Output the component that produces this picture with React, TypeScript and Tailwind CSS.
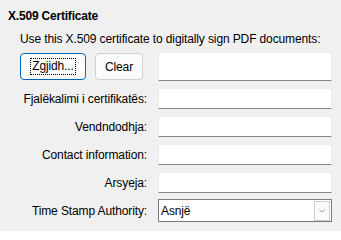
import { ChevronDown } from 'lucide-react'

const FIELDS = ['Fjalëkalimi i certifikatës:', 'Vendndodhja:', 'Contact information:', 'Arsyeja:']

function TextField() {
  return <div className="h-[21px] w-[174px] border border-[#ececec] border-b-[#868686] bg-white" />
}

export default function App() {
  return (
    <div
      className="h-[231px] w-[341px] whitespace-nowrap bg-[#f0f0f0] px-2 pt-[8px] text-[12px] leading-[16px] tracking-[-0.12px] text-black"
      style={{ fontFamily: '"Liberation Sans", Arial, sans-serif' }}
    >
      <div className="font-bold tracking-[-0.2px]">X.509 Certificate</div>
      <div className="pl-3">
        <div className="mt-[7px]">Use this X.509 certificate to digitally sign PDF documents:</div>

        {/* buttons + certificate name */}
        <div className="mt-[5px] flex items-center">
          <div className="flex w-[138px] gap-[9px]">
            <button className="flex h-[27px] w-[66px] items-center justify-center rounded-[4px] border border-[#0067c0] bg-[#fdfdfd]">
              <span className="px-[1px] leading-[15px] outline-1 outline-dotted outline-black">Zgjidh...</span>
            </button>
            <button className="h-[27px] w-[48px] rounded-[4px] border border-[#d0d0d0] bg-[#fbfbfb]">Clear</button>
          </div>
          <div className="h-[29px] w-[174px] border border-[#ececec] border-b-[#868686] bg-white" />
        </div>

        <div className="mt-[7px] flex flex-col gap-[7px]">
          {FIELDS.map((label) => (
            <div key={label} className="flex items-center">
              <span className="w-[128px] pr-[1px] text-right">{label}</span>
              <div className="ml-[10px]">
                <TextField />
              </div>
            </div>
          ))}
          <div className="-mt-[1px] flex items-center">
            <span className="w-[128px] pr-[1px] text-right">Time Stamp Authority:</span>
            <div className="ml-[10px] flex h-[23px] w-[174px] items-center border border-[#7a7a7a] bg-white pl-[2px] pr-[1px]">
              <span className="flex-1">Asnjë</span>
              <div className="flex h-[20px] w-[16px] items-center justify-center border border-[#cccccc] bg-[#fafafa]">
                <ChevronDown className="h-[10px] w-[10px] text-[#606060]" strokeWidth={1.5} />
              </div>
            </div>
          </div>
        </div>
      </div>
    </div>
  )
}
